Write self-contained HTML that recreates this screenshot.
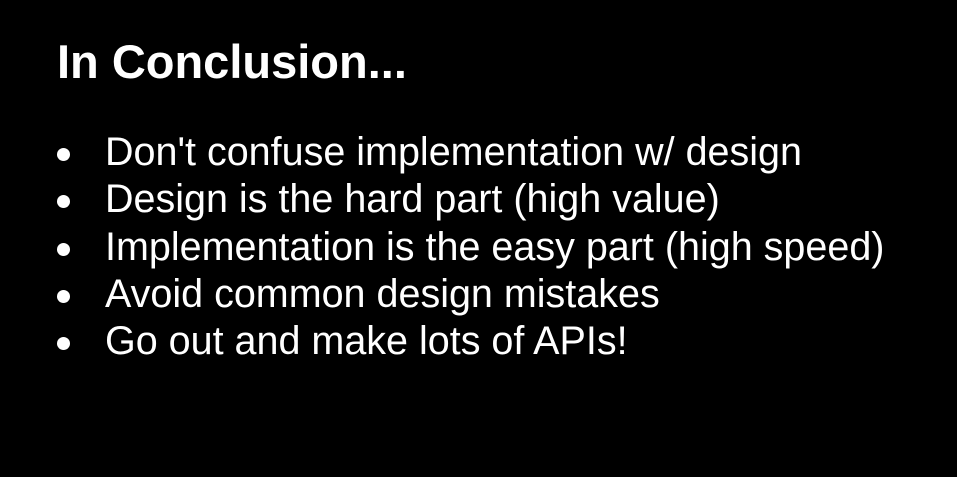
<!DOCTYPE html>
<html><head><meta charset="utf-8"><style>
html,body{margin:0;padding:0;background:#000;width:957px;height:477px;overflow:hidden}
body{position:relative;font-family:"Liberation Sans",Arial,sans-serif;color:#fff}
h1{position:absolute;left:57px;top:38px;margin:0;font-size:47px;line-height:47px;font-weight:bold}
ul{position:absolute;left:0;top:129px;margin:0;padding:0;list-style:none}
li{position:relative;padding-left:105px;font-size:39.5px;line-height:47.3px;white-space:nowrap}
li:before{content:"";position:absolute;left:57px;top:19px;width:13px;height:13px;border-radius:50%;background:#fff}
</style></head><body>
<h1>In Conclusion...</h1>
<ul>
<li>Don't confuse implementation w/ design</li>
<li>Design is the hard part (high value)</li>
<li>Implementation is the easy part (high speed)</li>
<li>Avoid common design mistakes</li>
<li>Go out and make lots of APIs!</li>
</ul>
</body></html>
